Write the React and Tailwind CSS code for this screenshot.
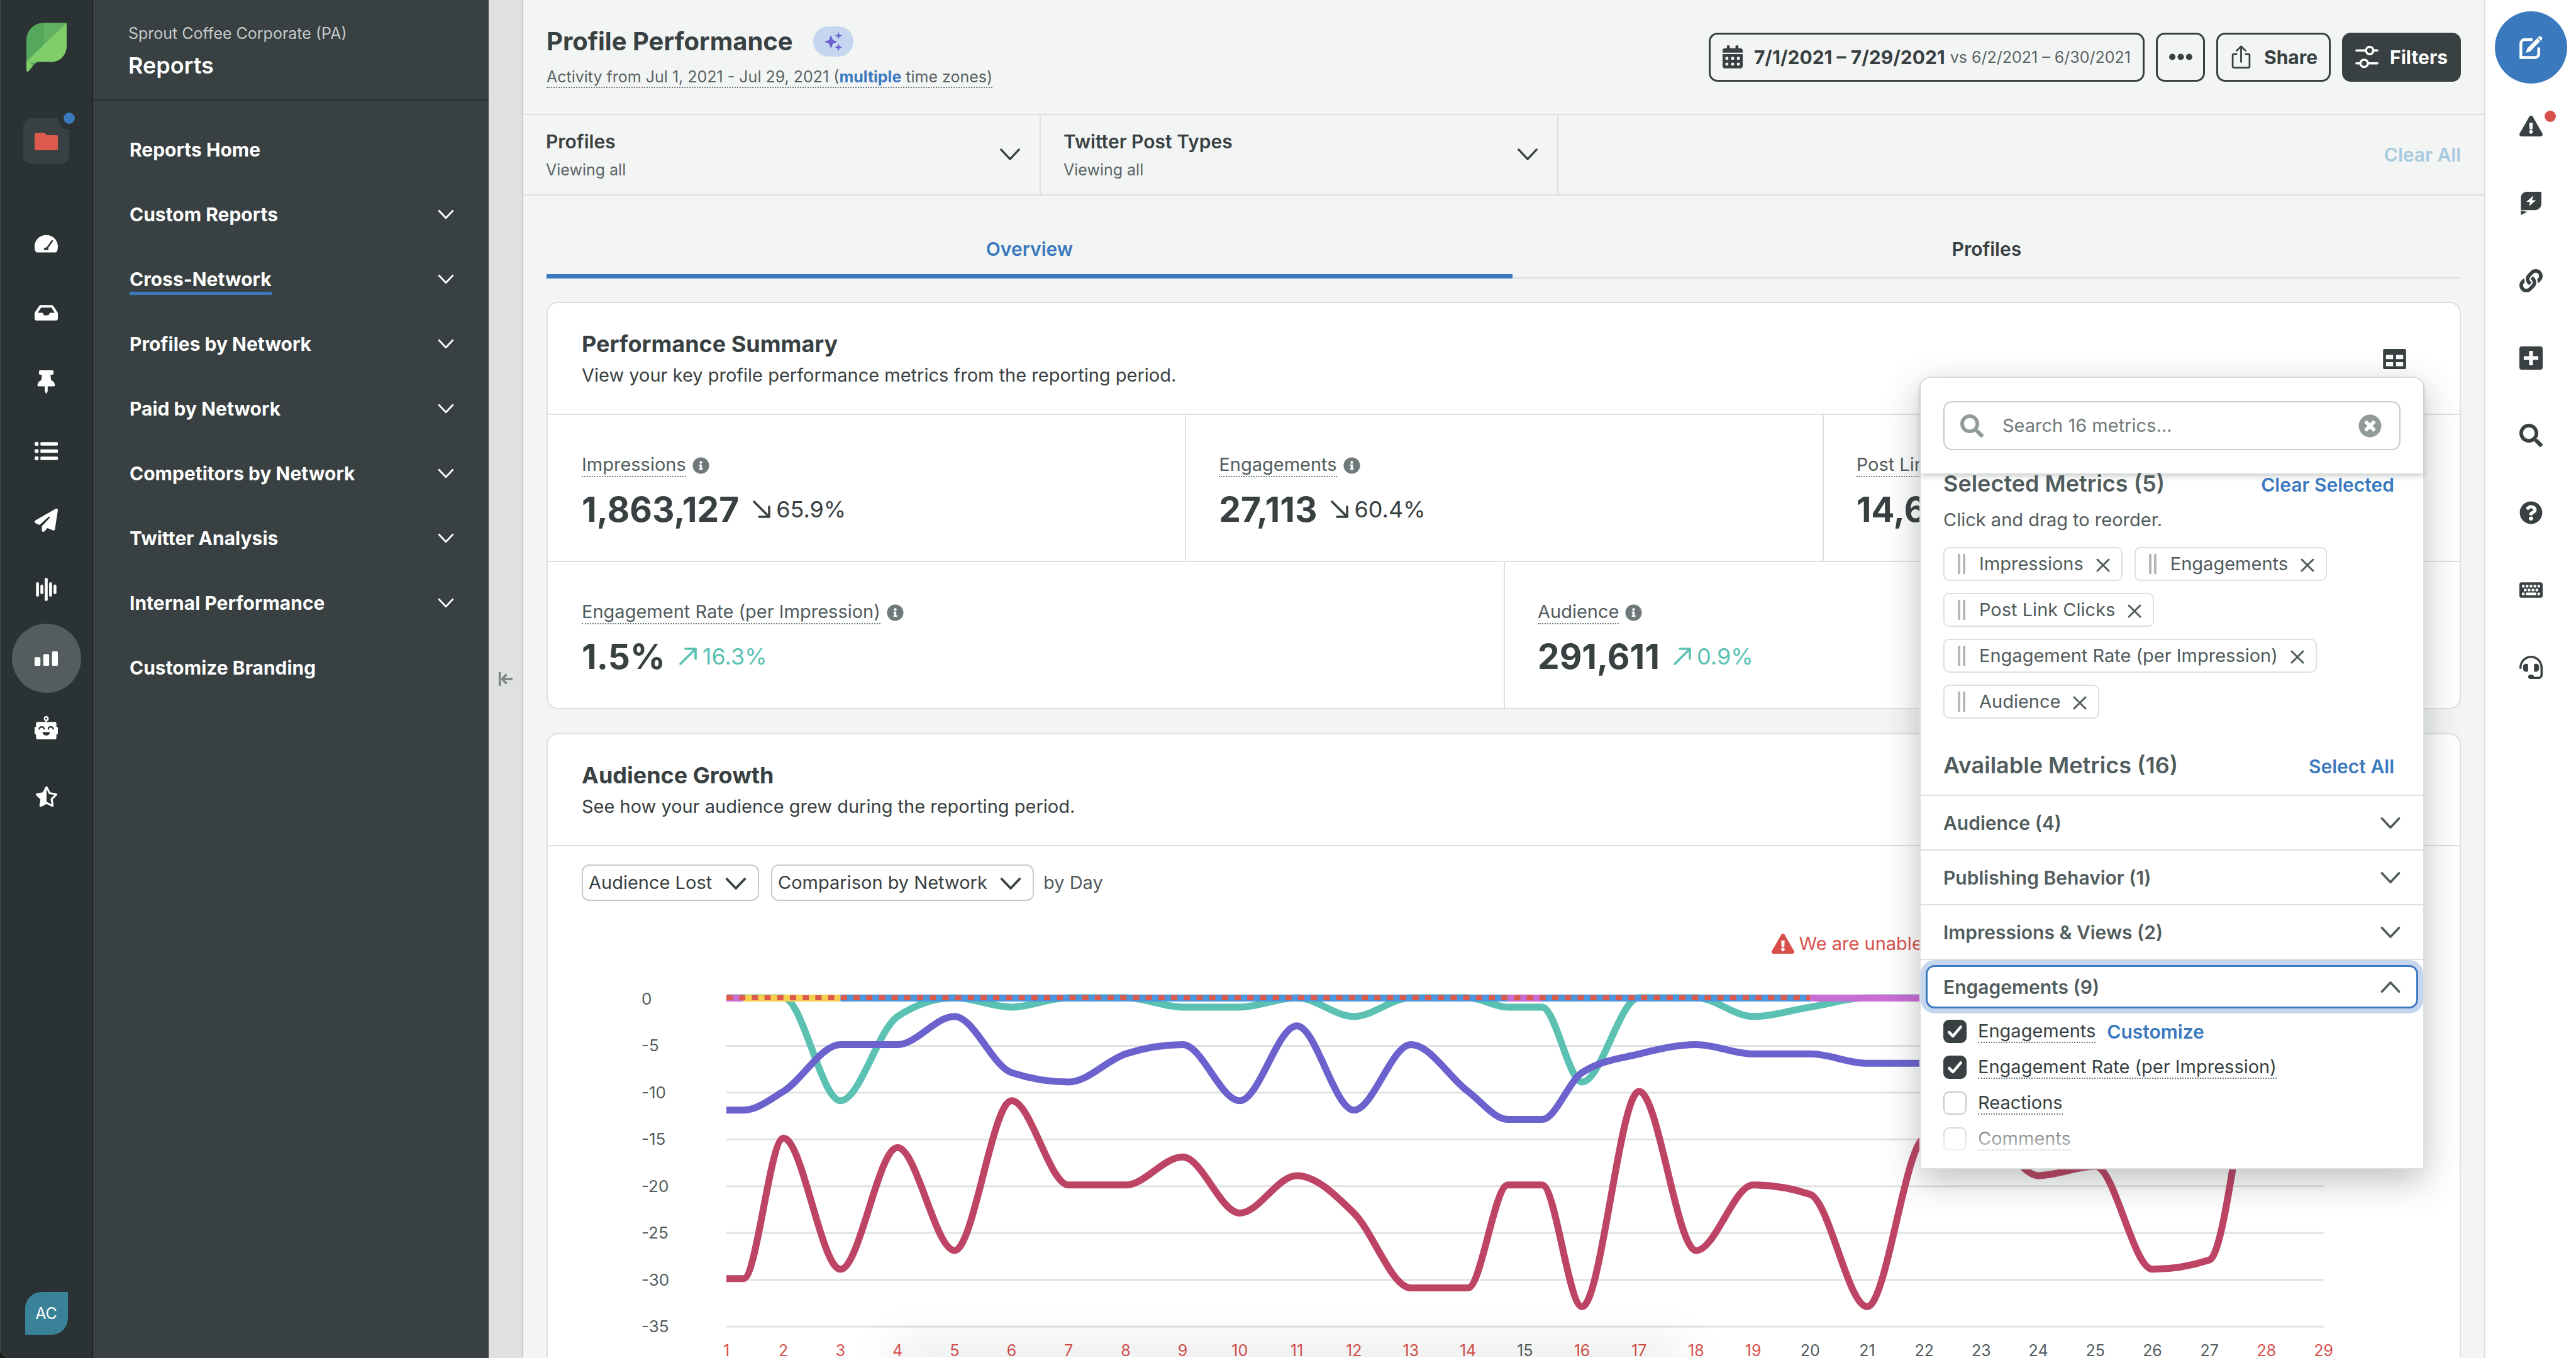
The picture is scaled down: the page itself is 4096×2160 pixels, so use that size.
import React from "react";
import {
  FaCalendarAlt,
  FaExclamationTriangle,
  FaHeadset,
  FaInbox,
  FaInfoCircle,
  FaKeyboard,
  FaLink,
  FaQuestionCircle,
  FaSearch,
  FaStarHalfAlt,
  FaThumbtack,
  FaTimesCircle,
} from "react-icons/fa";
import { FaPaperPlane } from "react-icons/fa6";

/* ---------- icons ---------- */

function Chevron({ className, up, weight = 1.2 }) {
  return (
    <svg viewBox="0 0 16 10" className={className} fill="none" stroke="currentColor" strokeWidth={weight} strokeLinecap="round" strokeLinejoin="round" aria-hidden="true">
      <path d={up ? "M1.2 8.6 8 1.4l6.8 7.2" : "M1.2 1.4 8 8.6l6.8-7.2"} />
    </svg>
  );
}

function Logo() {
  return (
    <svg viewBox="0 0 84 102" className="w-[64px] h-[78px]" aria-hidden="true">
      <path d="M0 82V36C0 16 16 0 36 0h1v46L0 82z" fill="#54a75b" />
      <path d="M36 0h48L36 47z" fill="#62b162" />
      <path d="M84 0v48c0 20-14 34-33 34H24c-3 0-5 2-7 4L5 101c-2 2-5 1-5-2V81L36 46z" fill="#80ce6a" />
      <path d="M6 83h18c-4 0-6 2-10 6z" fill="#54a75b" />
    </svg>
  );
}

function GaugeIcon() {
  return (
    <svg viewBox="0 0 16 16" className="size-[37px]" aria-hidden="true">
      <path d="M8 2C3.600 2 0 5.500 0 9.900c0 1.300.2 2.600.7 3.500.1.400.5.600.9.600h12.800c.4 0 .8-.2.900-.6.5-.9.700-2.200.7-3.500C16 5.500 12.400 2 8 2z" fill="#fff" />
      <path d="M12.100 6.200 8.600 11" stroke="#2a3233" strokeWidth="1.100" strokeLinecap="round" />
      <path d="M6.300 12.400c0-1 .8-1.800 1.700-1.800s1.700.8 1.700 1.800z" fill="#2a3233" />
    </svg>
  );
}

function ListIcon() {
  return (
    <svg viewBox="0 0 16 16" className="size-[37px]" fill="#fff" aria-hidden="true">
      {[3, 8, 13].map((y) => (
        <g key={y}>
          <circle cx="1.400" cy={y} r="1.400" />
          <rect x="4" y={y - 1.2} width="12" height="2.400" rx=".6" />
        </g>
      ))}
    </svg>
  );
}

function WaveIcon() {
  const bars = [[1, 10], [4, 6.6], [7, 16], [10, 10], [13, 6.6]];
  return (
    <svg viewBox="0 0 16 16" className="size-[37px]" fill="#fff" aria-hidden="true">
      {bars.map(([x, h]) => (
        <rect key={x} x={x} y={8 - h / 2} width="2" height={h} rx="1" />
      ))}
    </svg>
  );
}

function BarsIcon() {
  return (
    <svg viewBox="0 0 16 16" className="size-[37px]" fill="#fff" aria-hidden="true">
      <rect x="0" y="7" width="4" height="6" rx=".8" />
      <rect x="6" y="5" width="4" height="8" rx=".8" />
      <rect x="12" y="3" width="4" height="10" rx=".8" />
    </svg>
  );
}

function RobotIcon() {
  return (
    <svg viewBox="0 0 16 16" className="size-[37px]" aria-hidden="true">
      <circle cx="8" cy="1.700" r="1.200" fill="none" stroke="#fff" strokeWidth="1" />
      <path d="M7.500 2.800h1v1.300h-1z" fill="#fff" />
      <rect x="1" y="4" width="14" height="12" rx="1.200" fill="#fff" />
      <rect x="0" y="7.400" width="16" height="5.200" rx=".8" fill="#fff" />
      <path d="M3.200 8.900c.2-2 3.200-2 3.400 0M9.400 8.900c.2-2 3.200-2 3.400 0" fill="none" stroke="#2a3233" strokeWidth=".9" strokeLinecap="round" />
      <path d="M5.500 11h5c0 1.400-1 2.300-2.500 2.300S5.500 12.400 5.500 11z" fill="#2a3233" />
    </svg>
  );
}

function CollapseIcon() {
  return (
    <svg viewBox="0 0 22 22" className="size-[22px]" fill="none" stroke="#7b8484" strokeWidth="3.400" aria-hidden="true">
      <path d="M1.700 0v22M22 11H6M12.500 3.500 5.500 11l7 7.500" />
    </svg>
  );
}

function Sparkles() {
  return (
    <svg viewBox="0 0 16 16" className="w-[30px] h-[32px]" fill="#6b62ce" aria-hidden="true">
      <path d="M6 2.500 7.600 6.600 11.400 8.200 7.600 9.800 6 14 4.400 9.800.5 8.200l3.900-1.600z" />
      <path d="M12.400 0l.8 2.100 2.300.9-2.300.9-.8 2.200-.8-2.200-2.300-.9 2.300-.9zM12.400 9.900l.8 2.100 2.300.9-2.300.9-.8 2.200-.8-2.200-2.300-.9 2.300-.9z" />
    </svg>
  );
}

function ShareIcon() {
  return (
    <svg viewBox="0 0 16 16" className="size-[37px]" fill="none" stroke="currentColor" strokeWidth="1.200" strokeLinecap="round" strokeLinejoin="round" aria-hidden="true">
      <path d="M4.800 6H3.200c-.6 0-1 .4-1 1v7.400c0 .6.4 1 1 1h9.600c.6 0 1-.4 1-1V7c0-.6-.4-1-1-1h-1.600M8 11.500V.8M5 3.700 8 .7l3 3" />
    </svg>
  );
}

function FiltersIcon() {
  return (
    <svg viewBox="0 0 16 16" className="size-[37px]" fill="none" stroke="#fff" strokeWidth="1.500" strokeLinecap="round" aria-hidden="true">
      <path d="M.8 3.600h6.500M12.500 3.600h2.700M.8 12.400h2.700M8.700 12.400h6.500" />
      <circle cx="9.900" cy="3.600" r="2.500" />
      <circle cx="6.100" cy="12.400" r="2.500" />
    </svg>
  );
}

function DotsIcon() {
  return (
    <svg viewBox="0 0 16 16" className="size-[37px]" fill="currentColor" aria-hidden="true">
      <circle cx="2.200" cy="8" r="2.200" />
      <circle cx="8" cy="8" r="2.200" />
      <circle cx="13.800" cy="8" r="2.200" />
    </svg>
  );
}

function TableIcon() {
  return (
    <svg viewBox="0 0 16 14" className="w-[37px] h-[32px]" aria-hidden="true">
      <path fillRule="evenodd" fill="currentColor" d="M1 0h14c.6 0 1 .4 1 1v12c0 .6-.4 1-1 1H1c-.6 0-1-.4-1-1V1c0-.6.4-1 1-1zM2 4.200v2.900h5V4.200zM9 4.200v2.900h5V4.200zM2 9.200v2.800h5V9.200zM9 9.200v2.800h5V9.200z" />
    </svg>
  );
}

function ComposeIcon() {
  return (
    <svg viewBox="0 0 16 16" className="size-[37px]" aria-hidden="true">
      <path d="M9 2.600H3.600C2.200 2.600 1 3.700 1 5.200v9.700h9.700c1.500 0 2.600-1.200 2.600-2.600V8" fill="none" stroke="#fff" strokeWidth="1.900" />
      <path d="M12.300 1.600 14.300 3.600 7.600 10.600 4.400 11.700 5.500 8.500z" fill="#fff" />
      <path d="M13 .9c.6-.6 1.500-.8 2.200-.2.700.6.700 1.600 0 2.300l-.4.400-2.100-2.100z" fill="#fff" />
    </svg>
  );
}

function BoltBubbleIcon() {
  return (
    <svg viewBox="0 0 16 16" className="size-[37px]" aria-hidden="true">
      <path d="M1 12.600V4.200C1 1.900 2.700 0 5.200 0h9.900v8c0 2.600-1.800 4.600-4.300 4.600z" fill="currentColor" />
      <path d="M1 11.500v4.500l4.400-2.200L1 13z" fill="currentColor" />
      <path d="M9.600 2.600 4.700 7h2.700l-.9 3.100L11.400 5.800H8.700z" fill="#fff" />
    </svg>
  );
}

function PlusSquareIcon() {
  return (
    <svg viewBox="0 0 16 16" className="size-[37px]" aria-hidden="true">
      <rect width="16" height="16" rx="1.600" fill="currentColor" />
      <path d="M8 3v10M3 8h10" stroke="#fff" strokeWidth="2.600" />
    </svg>
  );
}

function CloseX() {
  return (
    <svg viewBox="0 0 22 22" className="size-[22px]" stroke="currentColor" strokeWidth="3" strokeLinecap="round" aria-hidden="true">
      <path d="M2 2l18 18M20 2 2 20" />
    </svg>
  );
}

function TrendArrow({ up }) {
  return (
    <svg viewBox="0 0 28 28" className="size-[28px]" fill="none" stroke="currentColor" strokeWidth="3.600" strokeLinecap="round" strokeLinejoin="round" aria-hidden="true">
      <path d={up ? "M2 26 26 2M10 2h16v16" : "M2 2l24 24M26 10v16H10"} />
    </svg>
  );
}

/* ---------- left rail ---------- */

const railItems = [
  ["Dashboard", <GaugeIcon />],
  ["Inbox", <FaInbox className="size-[37px]" />],
  ["Tasks", <FaThumbtack className="size-[37px]" />],
  ["Feeds", <ListIcon />],
  ["Publishing", <FaPaperPlane className="size-[37px]" />],
  ["Listening", <WaveIcon />],
  ["Reports", <BarsIcon />],
  ["Bots", <RobotIcon />],
  ["Reviews", <FaStarHalfAlt className="size-[34px]" />],
];

function Rail() {
  return (
    <nav aria-label="Main" className="flex w-[148px] shrink-0 flex-col items-center rounded-bl-[14px] border-r-2 border-l border-r-[#1b2122] border-l-[#454d4e] bg-[#2a3233] pt-[36px] pb-[37px] text-white">
      <a href="#home" aria-label="Home"><Logo /></a>
      <a href="#workspace" aria-label="Workspace" className="relative mt-[74px] flex size-[73px] items-center justify-center rounded-[14px] bg-[#384041]">
        <svg viewBox="0 0 16 12" className="h-[28px] w-[37px]" aria-hidden="true">
          <path d="M.9 0h5.600c.4 0 .7.2.9.5l.9 1.200h6.800c.5 0 .9.400.9.900v8.500c0 .5-.4.900-.9.900H.9C.4 12 0 11.600 0 11.100V.9C0 .4.4 0 .9 0z" fill="#dc5a4c" />
        </svg>
        <span className="absolute -top-[18px] -right-[18px] size-[36px] rounded-full border-[9px] border-[#2a3233] bg-[#3a79be]" />
      </a>
      <ul className="mt-[71px] flex flex-col">
        {railItems.map(([name, icon]) => (
          <li key={name}>
            <a
              href={"#" + name.toLowerCase()}
              aria-label={name}
              className={"flex size-[110px] items-center justify-center rounded-full " + (name === "Reports" ? "bg-[#545c5d]" : "")}
            >
              {icon}
            </a>
          </li>
        ))}
      </ul>
      <button className="mt-auto flex size-[68px] items-center justify-center rounded-tl-[26px] rounded-br-[26px] bg-[#3a8297] text-[25px] leading-[32px]">AC</button>
    </nav>
  );
}

/* ---------- sidebar ---------- */

const reportLinks = [
  ["Reports Home", false],
  ["Custom Reports", true],
  ["Cross-Network", true],
  ["Profiles by Network", true],
  ["Paid by Network", true],
  ["Competitors by Network", true],
  ["Twitter Analysis", true],
  ["Internal Performance", true],
  ["Customize Branding", false],
];

function Sidebar() {
  return (
    <aside className="flex w-[629px] shrink-0 flex-col bg-[#384041] text-white">
      <header className="flex h-[160px] flex-col gap-[12px] border-b-2 border-[#2a3233] pt-[37px] pl-[56px]">
        <p className="text-[25px] leading-[32px] text-[#c6c9c9]">Sprout Coffee Corporate (PA)</p>
        <h2 className="text-[36px] leading-[46px] font-semibold">Reports</h2>
      </header>
      <nav aria-label="Reports" className="pt-[26px] pr-[55px] pl-[58px]">
        {reportLinks.map(([name, hasMenu]) => (
          <a key={name} href="#report" className="flex h-[103px] items-center justify-between text-[30px] leading-[40px] font-bold">
            <span className={name === "Cross-Network" ? "border-y-[5px] border-t-transparent border-b-[#3a79be]" : ""}>{name}</span>
            {hasMenu && <Chevron className="h-[16px] w-[26px]" weight={1.7} />}
          </a>
        ))}
      </nav>
    </aside>
  );
}

/* ---------- page header ---------- */

function PageHeader() {
  return (
    <header className="flex h-[183px] items-center justify-between border-b-2 border-[#dee0e0] px-[37px]">
      <div>
        <div className="flex items-center gap-[32px]">
          <h1 className="text-[40px] leading-[50px] font-bold">Profile Performance</h1>
          <button aria-label="Insights" className="flex h-[48px] w-[64px] items-center justify-center rounded-[24px] bg-[#c5d6f0]"><Sparkles /></button>
        </div>
        <p className="mt-[15px] w-fit border-b-2 border-dotted border-[#6f7a7a] text-[25px] leading-[32px] text-[#5a6465]">
          Activity from Jul 1, 2021 - Jul 29, 2021 (<a href="#zones" className="font-bold text-[#3a79be]">multiple</a> time zones)
        </p>
      </div>
      <div className="flex gap-[18px]">
        <button className="flex h-[78px] items-center rounded-[14px] border-[3px] border-[#384041] px-[19px]">
          <FaCalendarAlt className="h-[37px] w-[32px]" />
          <span className="ml-[18px] text-[30px] leading-[40px] font-bold">7/1/2021 – 7/29/2021</span>
          <span className="ml-[8px] text-[25px] leading-[40px] text-[#5a6465]">vs 6/2/2021 – 6/30/2021</span>
        </button>
        <button aria-label="More" className="flex h-[78px] w-[78px] items-center justify-center rounded-[14px] border-[3px] border-[#384041]"><DotsIcon /></button>
        <button className="flex h-[78px] items-center gap-[18px] rounded-[14px] border-[3px] border-[#384041] px-[18px] text-[30px] leading-[40px] font-bold"><ShareIcon />Share</button>
        <button className="flex h-[78px] items-center gap-[18px] rounded-[14px] border-[3px] border-[#384041] bg-[#384041] px-[18px] text-[30px] leading-[40px] font-bold text-white"><FiltersIcon />Filters</button>
      </div>
    </header>
  );
}

function FilterBar() {
  return (
    <div className="flex h-[128px] items-stretch border-b-2 border-[#dee0e0]">
      {["Profiles", "Twitter Post Types"].map((name) => (
        <button key={name} className="flex w-[823px] items-center justify-between border-r-2 border-[#dee0e0] pr-[30px] pb-[2px] pl-[36px] text-left">
          <span className="flex flex-col gap-[9px]">
            <span className="text-[30px] leading-[40px] font-semibold">{name}</span>
            <span className="text-[25px] leading-[32px] text-[#5a6465]">Viewing all</span>
          </span>
          <Chevron className="h-[21px] w-[34px]" weight={1.6} />
        </button>
      ))}
      <button className="mr-[37px] ml-auto text-[30px] leading-[40px] font-semibold text-[#a7cade]">Clear All</button>
    </div>
  );
}

function Tabs() {
  return (
    <nav aria-label="Report tabs" className="mx-[37px] flex border-b-2 border-[#dee0e0] pt-[65px] text-center text-[30px] leading-[40px] font-semibold">
      <a href="#overview" className="-mb-[2px] flex-auto border-b-[7px] border-[#3a79be] pb-[20px] text-[#3a79be]">Overview</a>
      <a href="#profiles" className="flex-auto pb-[20px]">Profiles</a>
    </nav>
  );
}

/* ---------- performance summary ---------- */

function Metric({ label, value, change, up }) {
  return (
    <div className="flex flex-col gap-[18px] border-l-2 border-[#dee0e0] pt-[61px] pb-[49px] pl-[52px] first:border-transparent">
      <div className="flex items-center gap-[10px] text-[29px] leading-[36px] text-[#515c5d]">
        <span className="border-b-2 border-dotted border-[#6f7a7a]">{label}</span>
        <FaInfoCircle className="size-[27px] text-[#6f7979]" />
      </div>
      <div className="flex items-center">
        <span className="text-[55px] leading-[66px] font-bold">{value}</span>
        {change && (
          <span className={"ml-[22px] flex items-center gap-[9px] text-[36px] leading-[46px] " + (up ? "text-[#5bc1b3]" : "")}>
            <TrendArrow up={up} />
            {change}
          </span>
        )}
      </div>
    </div>
  );
}

function CardHeader({ title, text, children }) {
  return (
    <header className="flex items-center justify-between border-b-2 border-[#dee0e0] pt-[42px] pr-[85px] pb-[41px] pl-[54px]">
      <div className="flex flex-col gap-[7px]">
        <h2 className="text-[36px] leading-[46px] font-bold">{title}</h2>
        <p className="text-[29px] leading-[40px]">{text}</p>
      </div>
      {children}
    </header>
  );
}

function Summary() {
  return (
    <section className="relative mx-[37px] mt-[37px] rounded-[18px] border-2 border-[#dee0e0] bg-white">
      <CardHeader title="Performance Summary" text="View your key profile performance metrics from the reporting period.">
        <button aria-label="Choose metrics"><TableIcon /></button>
      </CardHeader>
      <div className="grid grid-cols-3 border-b-2 border-[#dee0e0]">
        <Metric label="Impressions" value="1,863,127" change="65.9%" />
        <Metric label="Engagements" value="27,113" change="60.4%" />
        <Metric label="Post Link Clicks" value="14,6" />
      </div>
      <div className="grid grid-cols-2">
        <Metric label="Engagement Rate (per Impression)" value="1.5%" change="16.3%" up />
        <Metric label="Audience" value="291,611" change="0.9%" up />
      </div>
      <MetricPicker />
    </section>
  );
}

/* ---------- metric picker ---------- */

function Check({ label, checked, children }) {
  return (
    <div className="flex h-[57px] items-center text-[29px] leading-[34px]">
      <label className="flex items-center gap-[18px]">
        <span className="grid size-[37px]">
          <input type="checkbox" defaultChecked={checked} className="col-start-1 row-start-1 size-[37px] appearance-none rounded-[9px] border-2 border-[#c6cacb] bg-white checked:border-[#384041] checked:bg-[#384041]" />
          {checked && (
            <svg viewBox="0 0 16 16" className="col-start-1 row-start-1 size-[37px]" fill="none" stroke="#fff" strokeWidth="1.900" strokeLinecap="round" strokeLinejoin="round" aria-hidden="true">
              <path d="M4 8.600 6.600 11.300 12 4.900" />
            </svg>
          )}
        </span>
        <span className="border-b-2 border-dotted border-[#6f7a7a]">{label}</span>
      </label>
      {children}
    </div>
  );
}

function MetricPicker() {
  return (
    <div role="dialog" aria-label="Choose metrics" className="absolute top-[117px] right-[56px] z-10 w-[803px] rounded-t-[18px] border-2 border-[#dee0e0] bg-white text-[#515c5d] shadow-[0_18px_55px_rgba(39,51,51,0.30)]">
      <div className="rounded-t-[16px] bg-white px-[36px] pt-[37px] pb-[37px] shadow-[0_5px_8px_rgba(39,51,51,0.22)]">
        <div className="flex h-[78px] items-center rounded-[14px] border-2 border-[#c6cacb] pr-[28px] pl-[25px]">
          <FaSearch className="size-[37px] shrink-0 text-[#929a9a]" />
          <input type="search" aria-label="Search metrics" placeholder="Search 16 metrics..." className="ml-[30px] min-w-0 flex-1 appearance-none text-[29px] leading-[40px] outline-none placeholder:text-[#6f7979]" />
          <button aria-label="Clear search"><FaTimesCircle className="size-[37px] text-[#929a9a]" /></button>
        </div>
      </div>
      <div className="relative h-[1105px]">
        <div className="px-[36px]">
          <div className="flex items-baseline justify-between pr-[10px]">
            <h3 className="text-[36px] leading-[32px] font-semibold">Selected Metrics (5)</h3>
            <button className="text-[30px] leading-[32px] font-semibold text-[#3a79be]">Clear Selected</button>
          </div>
          <p className="mt-[20px] text-[29px] leading-[40px]">Click and drag to reorder.</p>
          <ul className="mt-[23px] flex flex-wrap gap-[19px]">
            {["Impressions", "Engagements", "Post Link Clicks", "Engagement Rate (per Impression)", "Audience"].map((name) => (
              <li key={name} className="flex h-[54px] items-center rounded-[9px] border-2 border-[#dee0e0] pr-[18px] pl-[21px] text-[29px] leading-[40px]">
                <span className="h-[32px] w-[12px] border-x-4 border-[#b3b9bb]" />
                <span className="ml-[22px]">{name}</span>
                <button aria-label={"Remove " + name} className="ml-[20px] pt-[4px]"><CloseX /></button>
              </li>
            ))}
          </ul>
          <div className="mt-[51px] flex items-baseline justify-between pr-[10px] pb-[24px]">
            <h3 className="text-[36px] leading-[46px] font-semibold">Available Metrics (16)</h3>
            <button className="text-[30px] leading-[40px] font-semibold text-[#3a79be]">Select All</button>
          </div>
        </div>
        {["Audience (4)", "Publishing Behavior (1)", "Impressions & Views (2)"].map((name) => (
          <button key={name} className="flex h-[87px] w-full items-center justify-between border-t-2 border-[#dee0e0] px-[36px] text-[30px] leading-[40px] font-semibold">
            {name}
            <Chevron className="h-[20px] w-[32px]" weight={1.8} />
          </button>
        ))}
        <div className="border-t-2 border-[#dee0e0] p-[8px]">
          <button aria-expanded="true" className="flex h-[69px] w-full items-center justify-between rounded-[14px] border-[3px] border-[#3a79be] px-[25px] text-[30px] leading-[40px] font-semibold shadow-[0_0_0_8px_#c5d6ee]">
            Engagements (9)
            <Chevron up className="h-[20px] w-[32px]" weight={1.8} />
          </button>
        </div>
        <div className="px-[36px] text-[#384041]">
          <Check label="Engagements" checked>
            <a href="#customize" className="ml-[18px] text-[30px] font-semibold text-[#3a79be]">Customize</a>
          </Check>
          <Check label="Engagement Rate (per Impression)" checked />
          <Check label="Reactions" />
          <Check label="Comments" />
        </div>
        <div className="absolute inset-x-0 bottom-0 h-[88px] bg-linear-to-t from-white from-5% to-transparent" />
      </div>
    </div>
  );
}

/* ---------- audience growth chart ---------- */

const X0 = 284;
const STEP = 90.7;
const UNIT = 14.89;
const Y0 = 66;
const px = (day) => X0 + (day - 1) * STEP;
const py = (v) => Y0 - v * UNIT;

/* Monotone cubic interpolation through [day, value] points. */
function smooth(data) {
  const p = data.map(([d, v]) => [px(d), py(v)]);
  const n = p.length;
  const slope = (i) => (p[i + 1][1] - p[i][1]) / (p[i + 1][0] - p[i][0]);
  const t = p.map((_, i) => {
    if (i === 0 || i === n - 1) return 0;
    const h0 = p[i][0] - p[i - 1][0];
    const h1 = p[i + 1][0] - p[i][0];
    const s0 = slope(i - 1);
    const s1 = slope(i);
    if (s0 * s1 <= 0) return 0;
    const m = (s0 * h1 + s1 * h0) / (h0 + h1);
    return Math.sign(s0) * 2 * Math.min(Math.abs(s0), Math.abs(s1), 0.5 * Math.abs(m));
  });
  let d = `M${p[0][0]} ${p[0][1]}`;
  for (let i = 0; i < n - 1; i++) {
    const h = (p[i + 1][0] - p[i][0]) / 3;
    d += `C${p[i][0] + h} ${p[i][1] + h * t[i]} ${p[i + 1][0] - h} ${p[i + 1][1] - h * t[i + 1]} ${p[i + 1][0]} ${p[i + 1][1]}`;
  }
  return d;
}

const teal = [[1, 0], [2, 0], [3, -11], [4, -2], [5, 0], [6, -1], [7, 0], [8, 0], [9, -1], [10, -1], [11, 0], [12, -2], [13, 0], [14, 0], [14.7, -1], [15.3, -1], [16, -9], [17, 0], [18, 0], [19, -2], [20, -1], [21, 0], [29, 0]];
const purple = [[1, -12], [1.3, -12], [2, -10], [3, -5], [4, -5], [5, -2], [6, -8], [7, -9], [8, -6], [9, -5], [10, -11], [11, -3], [12, -12], [13, -5], [14, -10], [14.7, -13], [15.3, -13], [16, -8], [17, -6], [18, -5], [19, -6], [20, -6], [21, -7], [22, -7]];
const crimson = [[1, -30], [1.3, -30], [2, -15], [3, -29], [4, -16], [5, -27], [6, -11], [7, -20], [8, -20], [9, -17], [10, -23], [11, -19], [12, -23], [13, -31], [14, -31], [14.7, -20], [15.3, -20], [16, -33], [17, -10], [18, -27], [19, -20], [20, -21], [21, -33], [22, -15], [23, -14], [24, -19], [25, -18], [26, -29], [27, -28], [28, -2], [29, -2]];
const zeroBands = [[1, 1.3, "#c86dd4"], [1.3, 3, "#f5d04e"], [3, 14.7, "#4a96df"], [14.7, 15.3, "#c86dd4"], [15.3, 20, "#4a96df"], [20, 29, "#c86dd4"]];
const plainDays = [15, 20, 21, 22, 23, 24, 25, 26, 27];

function Chart() {
  return (
    <svg viewBox="0 0 3040 700" className="w-full" role="img" aria-label="Audience lost by day, compared by network">
      {[0, 5, 10, 15, 20, 25, 30, 35].map((v) => (
        <g key={v}>
          <rect x={X0} y={Y0 + 0.5 + v * UNIT} width={STEP * 28} height="3" fill="#e1e3e3" />
          <text x="149" y={Y0 + 11 + v * UNIT} fontSize="26" fill="#515c5d">{v === 0 ? "0" : "-" + v}</text>
        </g>
      ))}
      <g fill="none" strokeWidth="11" strokeLinejoin="round">
        <path d={smooth(teal)} stroke="#5bc1b3" />
        <path d={smooth(purple)} stroke="#6b62ce" />
        <path d={smooth(crimson)} stroke="#be4465" />
      </g>
      {zeroBands.map(([a, b, color]) => (
        <rect key={a} x={px(a)} y={Y0 - 5} width={px(b) - px(a)} height="11" fill={color} />
      ))}
      <path d={`M${X0} ${Y0}H${px(20)}`} stroke="#dc5a4c" strokeWidth="8" strokeDasharray="10 10.2" />
      {Array.from({ length: 29 }, (_, i) => i + 1).map((day) => (
        <text key={day} x={px(day)} y="636" fontSize="25" textAnchor="middle" fill={plainDays.includes(day) ? "#515c5d" : "#d8504b"}>{day}</text>
      ))}
    </svg>
  );
}

function Dropdown({ label, value }) {
  return (
    <span className="relative flex text-[29px] leading-[40px] text-[#384041]">
      <select aria-label={label} className="h-[58px] appearance-none rounded-[12px] border-2 border-[#c6cacb] bg-white pr-[72px] pl-[9px]">
        <option>{value}</option>
      </select>
      <Chevron className="pointer-events-none absolute top-[20px] right-[20px] h-[21px] w-[34px]" weight={1.8} />
    </span>
  );
}

function AudienceGrowth() {
  return (
    <section className="mx-[37px] mt-[38px] rounded-[18px] border-2 border-[#dee0e0] bg-white">
      <CardHeader title="Audience Growth" text="See how your audience grew during the reporting period." />
      <div className="flex items-center gap-[19px] pt-[29px] pl-[54px]">
        <Dropdown label="Measure" value="Audience Lost" />
        <Dropdown label="Comparison" value="Comparison by Network" />
        <span className="-ml-[4px] text-[29px] leading-[40px] text-[#515c5d]">by Day</span>
      </div>
      <p className="mt-[48px] ml-[64%] flex h-[40px] items-center gap-[8px] text-[29px] leading-[40px] text-[#d8504b]">
        <FaExclamationTriangle className="size-[36px]" />
        We are unable
      </p>
      <Chart />
    </section>
  );
}

/* ---------- right bar ---------- */

const tools = [
  ["Alerts", <FaExclamationTriangle className="size-[37px]" />],
  ["Suggestions", <BoltBubbleIcon />],
  ["Links", <FaLink className="size-[37px]" />],
  ["Add", <PlusSquareIcon />],
  ["Search", <FaSearch className="size-[37px]" />],
  ["Help", <FaQuestionCircle className="size-[37px]" />],
  ["Shortcuts", <FaKeyboard className="size-[37px]" />],
  ["Support", <FaHeadset className="size-[37px]" />],
];

function ToolBar() {
  return (
    <aside className="flex w-[146px] shrink-0 flex-col items-center border-l-2 border-[#dee0e0] bg-white pt-[18px]">
      <button aria-label="Compose" className="flex size-[115px] items-center justify-center rounded-full bg-[#3a79be]"><ComposeIcon /></button>
      <div className="mt-[6px] flex flex-col">
        {tools.map(([name, icon]) => (
          <button key={name} aria-label={name} className="relative flex h-[123px] w-[80px] items-center justify-center">
            {icon}
            {name === "Alerts" && <span className="absolute top-[37px] right-0 size-[18px] rounded-full bg-[#d8504b]" />}
          </button>
        ))}
      </div>
    </aside>
  );
}

export default function App() {
  return (
    <div className="flex h-screen overflow-hidden bg-[#14191a] font-['Inter',sans-serif] text-[#384041]">
      <Rail />
      <Sidebar />
      <button aria-label="Collapse sidebar" className="flex w-[55px] shrink-0 items-center justify-center border-r-2 border-[#c9cccb] bg-[#dfe1e0]"><CollapseIcon /></button>
      <main className="relative min-w-0 flex-1 overflow-hidden bg-[#f3f5f4]">
        <PageHeader />
        <FilterBar />
        <Tabs />
        <Summary />
        <AudienceGrowth />
        <div className="absolute bottom-[-18px] left-[19%] h-[20px] w-[40%] rounded-[18px] bg-white shadow-[0_0_80px_rgba(39,51,51,0.32)]" />
      </main>
      <ToolBar />
    </div>
  );
}
